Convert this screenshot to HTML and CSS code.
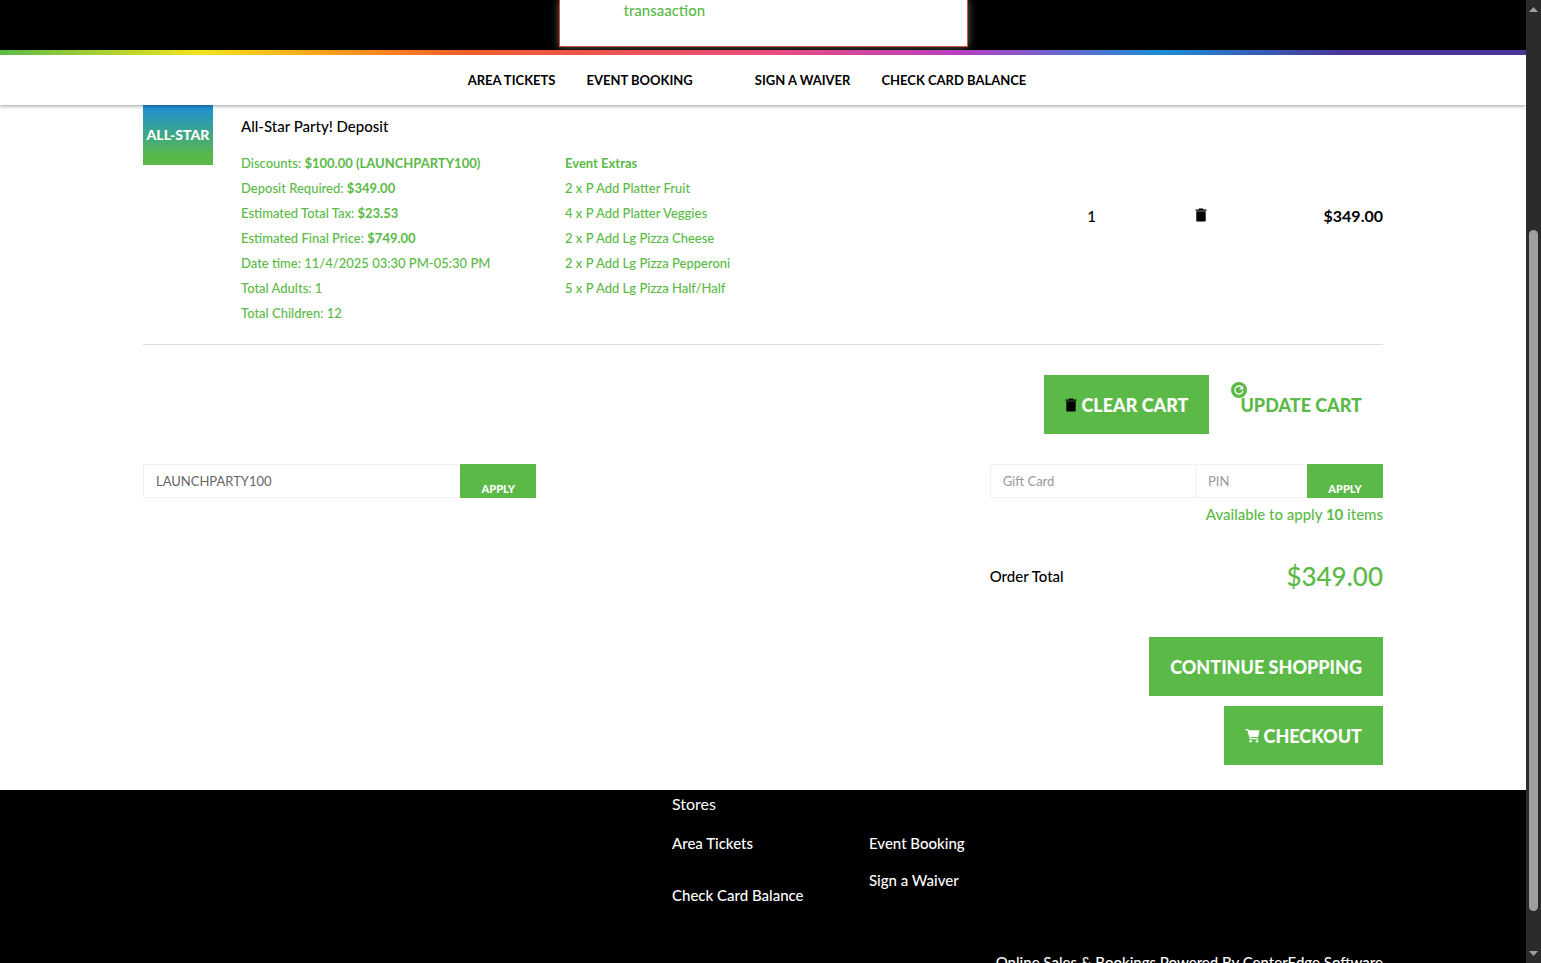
FILE: index.html
```html
<!DOCTYPE html>
<html lang="en">
<head>
    <meta charset="UTF-8">
    <meta name="viewport" content="width=device-width, initial-scale=1.0">
    <title>Shopping Cart</title>
    <link rel="stylesheet" href="styles.css">
</head>
<body>

    <div class="page">
        <div class="hero">
            <div class="notice">transaaction</div>
        </div>

        <header class="header">
            <nav class="nav">
                <a href="#">AREA TICKETS</a>
                <a href="#">EVENT BOOKING</a>
                <span></span>
                <a href="#">SIGN A WAIVER</a>
                <a href="#">CHECK CARD BALANCE</a>
            </nav>
        </header>

        <main class="container">
            <table class="cart">
                <tbody>
                    <tr>
                        <td class="cart-image"><div class="thumb">ALL-STAR</div></td>
                        <td class="cart-info">
                            <h2>All-Star Party! Deposit</h2>
                            <div class="details">
                                <ul>
                                    <li>Discounts: <b>$100.00 (LAUNCHPARTY100)</b></li>
                                    <li>Deposit Required: <b>$349.00</b></li>
                                    <li>Estimated Total Tax: <b>$23.53</b></li>
                                    <li>Estimated Final Price: <b>$749.00</b></li>
                                    <li>Date time: 11/4/2025 03:30 PM-05:30 PM</li>
                                    <li>Total Adults: 1</li>
                                    <li>Total Children: 12</li>
                                </ul>
                                <ul>
                                    <li><b>Event Extras</b></li>
                                    <li>2 x P Add Platter Fruit</li>
                                    <li>4 x P Add Platter Veggies</li>
                                    <li>2 x P Add Lg Pizza Cheese</li>
                                    <li>2 x P Add Lg Pizza Pepperoni</li>
                                    <li>5 x P Add Lg Pizza Half/Half</li>
                                </ul>
                            </div>
                        </td>
                        <td class="cart-qty">1</td>
                        <td class="cart-remove">
                            <button type="button" class="icon-btn" aria-label="Remove item">
                                <svg width="12" height="14" viewBox="0 0 12 14"><path d="M4 0.5h4l.6.9H11.5v1.3H.5V1.4h2.9zM1.3 3.2h9.4v9.6a.7.7 0 0 1-.7.7H2a.7.7 0 0 1-.7-.7z"/></svg>
                            </button>
                        </td>
                        <td class="cart-price">$349.00</td>
                    </tr>
                </tbody>
            </table>

            <div class="actions">
                <button type="button" class="btn">
                    <svg class="trash" width="12" height="14" viewBox="0 0 12 14"><path d="M4 0.5h4l.6.9H11.5v1.3H.5V1.4h2.9zM1.3 3.2h9.4v9.6a.7.7 0 0 1-.7.7H2a.7.7 0 0 1-.7-.7z"/></svg>
                    CLEAR CART
                </button>
                <button type="button" class="btn btn-link">
                    <svg class="refresh" width="16" height="16" viewBox="0 0 16 16"><circle cx="8" cy="8" r="8" fill="#5bba47"/><path d="M11.9 8.6A4 4 0 1 1 10.8 5.2" fill="none" stroke="#fff" stroke-width="1.3"/><path d="M12.2 3.4v4.1H8.1z" fill="#fff"/></svg>
                    UPDATE CART
                </button>
            </div>

            <div class="totals">
                <form class="code-form">
                    <input type="text" value="LAUNCHPARTY100" aria-label="Promo code">
                    <button type="button" class="apply">APPLY</button>
                </form>

                <div class="summary">
                    <form class="code-form">
                        <input type="text" placeholder="Gift Card" aria-label="Gift Card">
                        <input type="text" class="pin" placeholder="PIN" aria-label="PIN">
                        <button type="button" class="apply">APPLY</button>
                    </form>
                    <p class="available">Available to apply <b>10</b> items</p>
                    <div class="order-total">
                        <span>Order Total</span>
                        <span class="amount">$349.00</span>
                    </div>
                    <button type="button" class="btn">CONTINUE SHOPPING</button>
                    <button type="button" class="btn btn-checkout">
                        <svg width="15" height="15" viewBox="0 0 15 15"><path d="M0.5 1h2.8l.5 1.3H14.5L13.2 9H5.5l.3 1h7.4v1.2H4.8L2.4 2.2H.5z"/><circle cx="5.6" cy="13.2" r="1.3"/><circle cx="12" cy="13.2" r="1.3"/></svg>
                        CHECKOUT
                    </button>
                </div>
            </div>
        </main>

        <footer class="footer">
            <div class="container">
                <div class="footer-links">
                    <h3>Stores</h3>
                    <div class="link-col wide">
                        <a href="#">Area Tickets</a>
                        <a href="#">Check Card Balance</a>
                    </div>
                    <div class="link-col">
                        <a href="#">Event Booking</a>
                        <a href="#">Sign a Waiver</a>
                    </div>
                </div>
                <p class="powered">Online Sales &amp; Bookings Powered By CenterEdge Software</p>
            </div>
        </footer>
    </div>

    <div class="scrollbar" aria-hidden="true">
        <svg width="15" height="20" viewBox="0 0 15 20"><path d="M7.5 7l4.5 5H3z"/></svg>
        <div class="track"><div class="handle"></div></div>
        <svg width="15" height="20" viewBox="0 0 15 20"><path d="M7.5 13l4.5-5H3z"/></svg>
    </div>

</body>
</html>
```
FILE: styles.css
```css
* {
    box-sizing: border-box;
}
body {
    margin: 0;
    height: 100vh;
    display: flex;
    overflow: hidden;
    font-family: Lato, sans-serif;
    font-size: 15px;
    font-weight: 500;
    line-height: 20px;
    color: #000;
    background-color: #000;
}
h2, h3, p, ul {
    margin: 0;
    padding: 0;
}
a {
    color: inherit;
    text-decoration: none;
}
button, input {
    font-family: inherit;
    border-radius: 0;
}
button {
    cursor: pointer;
}
.page {
    flex: 1;
    min-width: 0;
    overflow: hidden;
    background-color: #fff;
    display: flex;
    flex-direction: column;
}
.container {
    width: 100%;
    max-width: 1240px;
    margin: 0 auto;
}

/* top */
.hero {
    background-color: #000;
    display: flex;
    justify-content: center;
    padding-bottom: 3px;
}
.notice {
    width: 409px;
    padding: 0 64px 26px;
    background-color: #fff;
    border: 1px solid #d9503f;
    border-top: 0;
    box-shadow: 0 0 8px #5a6a58;
    color: #5bba47;
}
.header {
    position: relative;
    z-index: 1;
    background-color: #fff;
    box-shadow: 0 1px 4px rgba(0, 0, 0, 0.4);
}
.header::before {
    content: "";
    display: block;
    height: 5px;
    background: linear-gradient(to right, #5bba47 0%, #f2e41c 13%, #fba31a 21%, #f15a2b 31%, #ec4d7c 50%, #b83fc4 63%, #1c8fd6 76%, #4a3599 88%, #4a3599 100%);
}
.nav {
    display: flex;
    justify-content: center;
    gap: 31px;
    padding-right: 32px;
    font-size: 13px;
    font-weight: bold;
    line-height: 50px;
}

/* cart */
.cart {
    width: 100%;
    margin-top: -18px;
    border-collapse: collapse;
    border-bottom: 1px solid #ddd;
}
.cart td {
    padding: 8px 0;
}
.cart .cart-image {
    width: 98px;
    vertical-align: top;
}
.thumb {
    width: 70px;
    height: 70px;
    padding-top: 10px;
    background: linear-gradient(#1c8fd6 15%, #5bba47 90%);
    color: #fff;
    font-size: 14px;
    font-weight: 900;
    line-height: 60px;
    text-align: center;
}
.cart-info h2 {
    margin: 21px 0 15px;
    font-size: 15px;
    font-weight: 500;
}
.details {
    display: grid;
    grid-template-columns: 324px 1fr;
    padding-bottom: 10px;
    color: #5bba47;
    font-size: 13px;
    line-height: 25px;
}
.details ul {
    list-style: none;
}
.cart-qty, .cart-remove {
    width: 109px;
    text-align: center;
}
.cart-price {
    width: 128px;
    font-size: 16px;
    font-weight: bold;
    text-align: right;
}
.icon-btn {
    padding: 0;
    border: 0;
    background: none;
}
.icon-btn svg {
    display: block;
}

/* buttons */
.actions {
    display: flex;
    justify-content: flex-end;
    gap: 10px;
    margin: 30px 0;
}
.btn {
    height: 59px;
    padding: 0 21px;
    border: 0;
    background-color: #5bba47;
    color: #fff;
    font-size: 18px;
    font-weight: 900;
    display: flex;
    align-items: center;
    gap: 4px;
}
.btn .trash {
    fill: #000;
}
.btn-link {
    position: relative;
    background: none;
    color: #5bba47;
}
.refresh {
    position: absolute;
    left: 12px;
    top: 7px;
}
.btn-checkout {
    margin-top: 10px;
}
.btn-checkout svg {
    fill: #fff;
}

/* codes and totals */
.totals {
    display: grid;
    grid-template-columns: repeat(3, 1fr);
    gap: 30px;
    align-items: start;
}
.summary {
    grid-column: 3;
    display: flex;
    flex-direction: column;
    align-items: flex-end;
    padding-bottom: 25px;
}
.code-form {
    display: flex;
    width: 100%;
    height: 34px;
}
.code-form input {
    flex: 1;
    min-width: 0;
    padding: 0 12px;
    border: 1px solid #f2f2f2;
    border-right: 0;
    color: #666;
    font-size: 13px;
}
.code-form input::placeholder {
    color: #999;
}
.code-form .pin {
    flex: 0 0 112px;
}
.apply {
    width: 76px;
    padding: 14px 0 0;
    border: 0;
    background-color: #5bba47;
    color: #fff;
    font-size: 11px;
    font-weight: 900;
}
.available {
    margin-top: 6px;
    color: #5bba47;
}
.order-total {
    display: flex;
    justify-content: space-between;
    align-items: center;
    width: 100%;
    height: 40px;
    margin: 32px 0 41px;
}
.amount {
    color: #5bba47;
    font-size: 26px;
}

/* footer */
.footer {
    flex: 1 0 auto;
    background-color: #000;
    color: #fff;
}
.footer-links {
    display: grid;
    grid-template-columns: 197px 1fr;
    margin-left: 529px;
    padding-top: 4px;
}
.footer-links h3 {
    grid-column: 1 / 3;
    margin-bottom: 19px;
    font-size: 16px;
    font-weight: normal;
}
.link-col {
    display: flex;
    flex-direction: column;
    gap: 17px;
}
.link-col.wide {
    gap: 32px;
}
.powered {
    margin-top: 47px;
    text-align: right;
}

/* scrollbar */
.scrollbar {
    width: 15px;
    background-color: #2b2b2b;
    display: flex;
    flex-direction: column;
    align-items: center;
}
.scrollbar svg {
    fill: #9f9f9f;
    flex: none;
}
.track {
    flex: 1;
    width: 9px;
    display: flex;
    flex-direction: column;
}
.track::before {
    content: "";
    flex: 210;
}
.track::after {
    content: "";
    flex: 32;
}
.handle {
    flex: 681;
    border-radius: 5px;
    background-color: #9f9f9f;
}
```
